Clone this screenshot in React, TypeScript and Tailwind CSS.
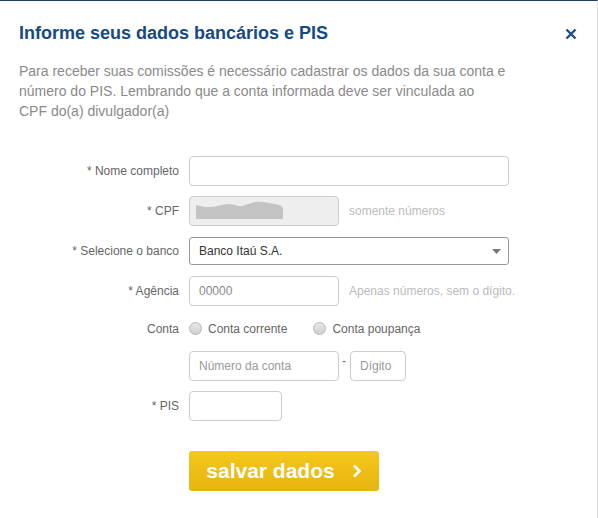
const font = { fontFamily: '"Liberation Sans", Arial, sans-serif' };

function Row({ label, children }: { label: string; children: React.ReactNode }) {
  return (
    <div className="flex h-[30px] items-center">
      <label className="w-[189px] pr-[10px] text-right text-[12px] text-[#666]">{label}</label>
      <div className="flex items-center">{children}</div>
    </div>
  );
}

function Radio({ label }: { label: string }) {
  return (
    <label className="flex items-center gap-[6px] text-[12px] text-[#666]">
      <span className="inline-block h-[13px] w-[13px] rounded-full border border-[#b5b5b5] bg-gradient-to-b from-[#e8e8e8] to-[#cfcfcf]" />
      {label}
    </label>
  );
}

const input =
  "h-[30px] rounded-[4px] border border-[#ccc] bg-white px-[9px] text-[12px] text-[#555] placeholder:text-[#999] outline-none";

export default function App() {
  return (
    <div style={font} className="h-[518px] w-[598px] overflow-hidden border-t border-r border-t-[#1f3c63] border-r-[#dcdcdc] bg-white">
      <div className="flex items-center justify-between pl-[19px] pr-[20px] pt-[21px]">
        <h2 className="text-[18px] font-bold leading-[22px] text-[#164a82]">Informe seus dados bancários e PIS</h2>
        <svg width="12" height="12" viewBox="0 0 12 12" className="mt-[2px]">
          <path d="M1.5 1.5 L10.5 10.5 M10.5 1.5 L1.5 10.5" stroke="#1f4f86" strokeWidth="2.4" />
        </svg>
      </div>
      <p className="mt-[17px] px-[19px] text-[14px] leading-[20px] text-[#8a8a8a]">
        Para receber suas comissões é necessário cadastrar os dados da sua conta e
        <br />
        número do PIS. Lembrando que a conta informada deve ser vinculada ao
        <br />
        CPF do(a) divulgador(a)
      </p>
      <form className="mt-[35px] flex flex-col gap-[10px]">
        <Row label="* Nome completo">
          <input className={`${input} w-[320px]`} />
        </Row>
        <Row label="* CPF">
          <div className="relative h-[30px] w-[150px] rounded-[4px] border border-[#ccc] bg-[#eee]">
            <svg width="90" height="20" viewBox="0 0 90 20" className="absolute left-[5px] top-[4px]">
              <path
                d="M1 4 C8 6 14 7 22 5 C30 3 34 2 40 4 C46 7 52 3 60 1 C68 0 72 2 80 3 C86 4 88 6 88 8 L88 18 L1 18 Z"
                fill="#c3c3c3"
              />
            </svg>
          </div>
          <span className="ml-[10px] text-[12px] text-[#bbb]">somente números</span>
        </Row>
        <Row label="* Selecione o banco">
          <div className="flex h-[28px] w-[320px] items-center justify-between rounded-[3px] border border-[#999] bg-white pl-[9px] pr-[7px] text-[12px] text-[#333]">
            <span>Banco Itaú S.A.</span>
            <svg width="9" height="5" viewBox="0 0 9 5">
              <path d="M0 0 L9 0 L4.5 5 Z" fill="#777" />
            </svg>
          </div>
        </Row>
        <Row label="* Agência">
          <input className={`${input} w-[150px] text-[#888]`} defaultValue="00000" />
          <span className="ml-[10px] text-[12px] text-[#bbb]">Apenas números, sem o dígito.</span>
        </Row>
        <div className="flex h-[25px] items-center">
          <span className="w-[189px] pr-[10px] text-right text-[12px] text-[#666]">Conta</span>
          <div className="flex items-center gap-[26px]">
            <Radio label="Conta corrente" />
            <Radio label="Conta poupança" />
          </div>
        </div>
        <div className="flex items-center pl-[189px]">
          <input className={`${input} w-[150px]`} placeholder="Número da conta" />
          <span className="ml-[3px] mr-[4px] -mt-[10px] text-[12px] text-[#666]">-</span>
          <input className={`${input} w-[56px]`} placeholder="Dígito" />
        </div>
        <Row label="* PIS">
          <input className={`${input} w-[93px]`} />
        </Row>
        <div className="mt-[20px] pl-[189px]">
          <button
            type="button"
            className="flex h-[40px] w-[190px] items-center justify-center gap-[17px] rounded-[3px] bg-gradient-to-b from-[#f6c81b] to-[#e5b30f] text-[21px] font-bold text-white"
          >
            salvar dados
            <svg width="10" height="14" viewBox="0 0 10 14">
              <path d="M2 1.5 L7.5 7 L2 12.5" stroke="#fff" strokeWidth="2.6" fill="none" />
            </svg>
          </button>
        </div>
      </form>
    </div>
  );
}
